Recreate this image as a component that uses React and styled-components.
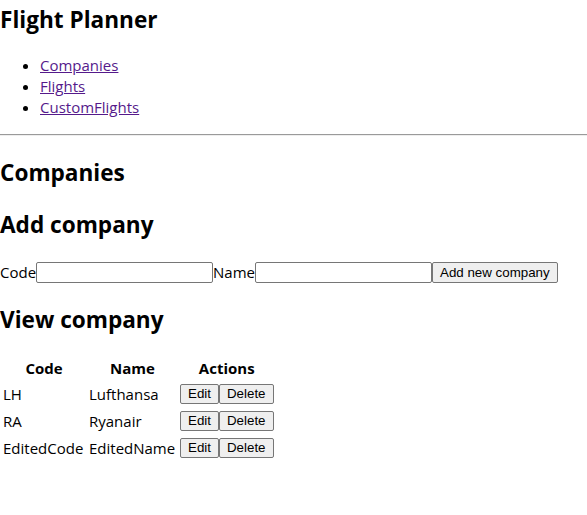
import React from "react";
import styled, { createGlobalStyle } from "styled-components";

const Global = createGlobalStyle`
  html, body { margin: 0; padding: 0; background: #fff; }
  body {
    font-family: "Open Sans", "Noto Sans", sans-serif;
    font-size: 15px;
    line-height: 21px;
    color: #000;
  }
`;

const Page = styled.div`
  display: flow-root;
`;

const Heading = styled.h2`
  font-size: 22.6px;
  line-height: 30px;
  padding-top: 2px;
  font-weight: 700;
  margin: ${(p) => (p.$first ? "3px 0 20px" : "20px 0")};
`;

const NavList = styled.ul`
  margin: 16px 0;
  padding-left: 40px;
  list-style: disc;
`;

const NavItem = styled.li`
  line-height: 21px;
`;

const NavLink = styled.a`
  color: #551a8b;
  text-decoration: underline;
`;

const Rule = styled.hr`
  margin: 8px 0;
  height: 0;
  border: 0;
  border-top: 1px solid #9a9a9a;
  border-bottom: 1px solid #eeeeee;
`;

const FormRow = styled.form`
  display: flex;
  align-items: center;
  height: 23px;
  padding-top: 2px;
  box-sizing: border-box;
  margin: 0;
`;

const Label = styled.label`
  line-height: 21px;
`;

const TextInput = styled.input`
  box-sizing: border-box;
  width: 177px;
  height: 21px;
  border: 1px solid #767676;
  border-radius: 2px;
  padding: 1px 2px;
  font: 13.333px "Liberation Sans", Arial, sans-serif;
  background: #fff;
  margin: 0;
`;

const Button = styled.button`
  box-sizing: border-box;
  height: ${(p) => (p.$tall ? "21px" : "20px")};
  padding: 0 7px;
  margin: 0;
  border: 1px solid #767676;
  border-radius: 2px;
  background: #efefef;
  color: #000;
  font: 13.333px/16px "Liberation Sans", Arial, sans-serif;
  vertical-align: middle;
`;

const Table = styled.table`
  border-collapse: separate;
  border-spacing: 2px;
  margin: 0;
`;

const Th = styled.th`
  width: ${(p) => p.$w}px;
  padding: 1px;
  text-align: center;
  font-weight: 700;
  line-height: 21px;
`;

const Tr = styled.tr`
  height: 25px;
`;

const Td = styled.td`
  padding: 1px;
  line-height: 21px;
  white-space: nowrap;
  vertical-align: middle;
`;

const ActionsCell = styled(Td)`
  font-size: 0;
`;

const companies = [
  { code: "LH", name: "Lufthansa" },
  { code: "RA", name: "Ryanair" },
  { code: "EditedCode", name: "EditedName" },
];

export default function App() {
  return (
    <Page>
      <Global />
      <Heading as="h1" $first>Flight Planner</Heading>
      <NavList>
        <NavItem><NavLink href="#companies">Companies</NavLink></NavItem>
        <NavItem><NavLink href="#flights">Flights</NavLink></NavItem>
        <NavItem><NavLink href="#custom">CustomFlights</NavLink></NavItem>
      </NavList>
      <Rule />
      <Heading>Companies</Heading>
      <Heading>Add company</Heading>
      <FormRow onSubmit={(e) => e.preventDefault()}>
        <Label>Code</Label>
        <TextInput type="text" />
        <Label>Name</Label>
        <TextInput type="text" />
        <Button type="submit" $tall>Add new company</Button>
      </FormRow>
      <Heading>View company</Heading>
      <Table>
        <thead>
          <tr>
            <Th $w={82}>Code</Th>
            <Th $w={87}>Name</Th>
            <Th $w={93}>Actions</Th>
          </tr>
        </thead>
        <tbody>
          {companies.map((c) => (
            <Tr key={c.code}>
              <Td>{c.code}</Td>
              <Td>{c.name}</Td>
              <ActionsCell>
                <Button type="button">Edit</Button>
                <Button type="button">Delete</Button>
              </ActionsCell>
            </Tr>
          ))}
        </tbody>
      </Table>
    </Page>
  );
}
